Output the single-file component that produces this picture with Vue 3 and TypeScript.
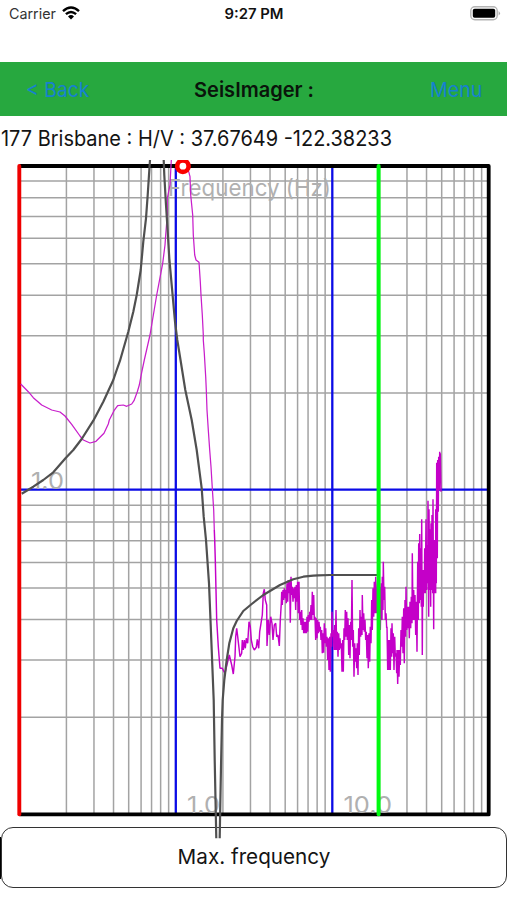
<script setup lang="ts">
type Pt = [number, number]
type Col = [number, number, number]

const plot = { left: 19.3, top: 166, mid: 489.7, bottom: 814.4, right: 488.7, decade: 156.5, vDecade: 324.3 }

const logs = [2, 3, 4, 5, 6, 7, 8, 9].map((n) => Math.log10(n))
const vLines = [0, 1, 2].flatMap((d) => logs.map((l) => plot.left + (d + l) * plot.decade))
const hLines = [0, 1].flatMap((d) => logs.map((l) => 490.5 + (d - l) * plot.vDecade))

// Curves are stored in thirds of a pixel, relative to the origin of each section.
function section(ox: number, oy: number, pts: Pt[]): Pt[] {
  return pts.map(([x, y]) => [ox + x / 3, oy + y / 3])
}
function columns(ox: number, oy: number, cols: Col[]): Pt[] {
  return section(ox, oy, cols.flatMap(([x, a, b]): Pt[] => [[x - 1, a], [x + 1, b]]))
}
function line(...parts: Pt[][]): string {
  return parts.flat().map(([x, y]) => `${x.toFixed(1)},${y.toFixed(1)}`).join(' ')
}

const measuredLow = line(
  section(0, 340, [[62, 132], [85, 155], [100, 173], [125, 195], [155, 210], [180, 216], [195, 228], [215, 253], [240, 288], [250, 300], [270, 309], [288, 304], [300, 292], [312, 280], [325, 252], [328, 240], [342, 212], [353, 197], [370, 195], [380, 199], [395, 192], [402, 182], [412, 155], [418, 135], [425, 97], [433, 60]]),
  section(0, 155, [[450, 540], [470, 420], [488, 325], [495, 270], [497, 240], [502, 180], [502, 130], [510, 90], [514, 15]]),
)
const measuredHigh = line(
  section(140, 155, [[135, 40], [146, 50], [150, 65], [152, 120], [158, 180], [160, 240], [164, 300], [168, 315], [177, 322], [181, 380], [183, 420], [187, 480], [190, 540]]),
  section(160, 340, [[130, 0], [133, 40], [137, 110], [139, 150], [141, 210], [145, 270], [149, 330], [153, 380], [157, 445], [161, 510], [163, 570]]),
)
const measuredNoise = line(
  section(160, 340, [[163, 570]]),
  section(190, 540, [[74, 0], [76, 60], [78, 150], [80, 240], [85, 320], [90, 385], [97, 385], [105, 400], [112, 370], [118, 345], [125, 375], [130, 402], [135, 350], [137, 290], [140, 265], [143, 290], [150, 350], [155, 340], [157, 300], [160, 330], [163, 300], [166, 325], [169, 295], [173, 310], [177, 245], [181, 260], [184, 300], [188, 320], [193, 330], [199, 322], [202, 298], [206, 325], [209, 275], [213, 250], [217, 225], [220, 160], [223, 148], [226, 180], [230, 195], [231, 318], [235, 240], [238, 285], [242, 230], [246, 250], [249, 300], [253, 255], [257, 250], [260, 290], [264, 285], [268, 318], [271, 240], [274, 190]]),
  columns(190, 540, [[276, 155, 195], [280, 150, 180], [284, 145, 175], [288, 150, 190], [292, 130, 185], [296, 120, 160], [300, 125, 248], [304, 110, 165], [308, 140, 185], [312, 145, 175], [316, 140, 210], [320, 135, 185], [324, 125, 220], [328, 125, 240], [332, 215, 255], [336, 210, 270], [340, 235, 280], [344, 245, 280], [348, 245, 280], [352, 230, 275], [356, 225, 245], [360, 215, 240], [364, 195, 240], [368, 155, 225], [372, 165, 240], [376, 230, 300]]),
  columns(310, 540, [[20, 235, 295], [24, 240, 280], [28, 245, 275], [32, 260, 300], [36, 270, 340], [40, 280, 338], [44, 250, 310], [48, 265, 320], [52, 290, 360], [56, 295, 390], [60, 290, 395], [64, 280, 320], [67, 215, 290], [71, 270, 330], [75, 255, 330], [79, 210, 330], [83, 275, 350], [87, 280, 330], [91, 295, 325], [95, 310, 395], [99, 300, 395], [103, 265, 300], [107, 210, 290], [111, 215, 300], [115, 235, 345], [119, 255, 355], [123, 245, 300], [127, 120, 320], [131, 270, 410], [135, 310, 365], [139, 325, 385], [143, 310, 405], [147, 265, 345], [151, 210, 290], [155, 230, 285], [158, 165, 270], [162, 220, 275], [166, 240, 300], [170, 275, 355], [174, 285, 385], [178, 280, 365], [182, 260, 310], [186, 180, 270], [190, 145, 230], [194, 125, 220], [198, 110, 220], [204, 120, 220], [210, 140, 270], [215, 130, 240], [218, 110, 210], [221, 65, 180], [225, 140, 240], [229, 220, 265], [232, 260, 390], [236, 300, 390], [240, 300, 390], [244, 265, 350], [247, 250, 340], [251, 280, 390], [255, 290, 350], [259, 340, 400], [262, 330, 432], [266, 330, 410], [270, 330, 375], [274, 270, 320], [278, 230, 340], [282, 205, 370], [286, 180, 290], [289, 140, 270], [293, 200, 265], [297, 200, 295], [301, 185, 265], [305, 170, 250], [308, 40, 240], [312, 150, 240], [316, 165, 285], [320, 185, 335]]),
  columns(380, 430, [[114, 395, 570], [117, 340, 520], [120, 312, 510], [123, 355, 530], [126, 268, 675], [129, 420, 530], [132, 420, 490], [135, 355, 490], [139, 268, 480], [142, 345, 460], [145, 212, 560], [148, 238, 480], [151, 298, 530], [154, 280, 480], [157, 255, 490], [160, 208, 598], [163, 330, 490], [166, 330, 490], [168, 238, 460], [171, 98, 385], [174, 90, 245], [177, 80, 180], [180, 65, 155], [182, 70, 185]]),
)

const modelLow = line(
  section(0, 340, [[65, 461], [100, 440], [130, 420], [160, 397], [197, 354], [220, 330], [245, 297], [280, 242], [310, 185], [340, 120], [350, 90], [360, 62]]),
  section(0, 155, [[385, 530], [400, 470], [410, 420], [422, 345], [430, 260], [438, 190], [443, 120], [447, 60], [450, 15]]),
)
const modelFall = line(
  section(0, 155, [[491, 15], [493, 60], [498, 150], [503, 230], [508, 310], [516, 400], [525, 500], [532, 555]]),
  section(160, 340, [[60, 50], [76, 150], [95, 240], [110, 330], [125, 445], [131, 530]]),
  section(190, 540, [[48, 0], [57, 130], [64, 300], [71, 480]]),
  section(140, 690, [[224, 210], [229, 445]]),
)
const modelRise = line(
  section(140, 690, [[239, 445], [243, 230], [246, 90]]),
  section(190, 540, [[98, 480], [103, 420], [110, 360], [118, 310], [130, 265], [140, 243], [160, 213], [185, 192], [220, 165], [240, 153], [270, 135], [310, 118], [340, 110], [370, 107]]),
  section(310, 540, [[25, 106], [60, 105], [205, 105]]),
)
</script>

<template>
  <main class="screen">
    <header class="status">
      <div class="carrier">
        <span>Carrier</span>
        <svg class="wifi" viewBox="0 0 18 14">
          <path d="M1 5.2Q9-2.2 17 5.2" />
          <path d="M3.9 8.2Q9 3.6 14.1 8.2" />
          <path class="dot" d="M6 10.4Q9 7.8 12 10.4L9 13.6Z" />
        </svg>
      </div>
      <svg class="clock" viewBox="0 0 70 20"><text x="0.5" y="14.5" textLength="59" lengthAdjust="spacingAndGlyphs">9:27 PM</text></svg>
      <svg class="battery" viewBox="0 0 31 15">
        <rect class="case" x="0.8" y="0.8" width="26.4" height="13" rx="4" />
        <rect class="charge" x="2.8" y="2.8" width="22.4" height="9" rx="1.8" />
        <path class="cap" d="M28.6 5Q31.4 7.3 28.6 9.6Z" />
      </svg>
    </header>

    <nav class="bar">
      <svg viewBox="0 0 507 54">
        <text class="link" x="26" y="34.5" textLength="63.5" lengthAdjust="spacingAndGlyphs">&lt; Back</text>
        <text class="title" x="194" y="34.5" textLength="120" lengthAdjust="spacingAndGlyphs">SeisImager :</text>
        <text class="link" x="430" y="34.5" textLength="52.5" lengthAdjust="spacingAndGlyphs">Menu</text>
      </svg>
    </nav>

    <svg class="site" viewBox="0 0 507 44">
      <text x="1" y="29.9" textLength="391" lengthAdjust="spacingAndGlyphs">177 Brisbane : H/V : 37.67649 -122.38233</text>
    </svg>

    <svg class="chart" viewBox="0 160 507 679">
      <g class="grid">
        <line v-for="x in vLines" :key="x" :x1="x" :x2="x" y1="166" y2="814" />
        <line v-for="y in hLines" :key="y" x1="19" x2="488" :y1="y" :y2="y" />
      </g>
      <g class="major">
        <line x1="19" x2="488" :y1="plot.mid" :y2="plot.mid" />
        <line x1="175.8" x2="175.8" y1="166" y2="814" />
        <line x1="332.3" x2="332.3" y1="166" y2="814" />
      </g>
      <path class="frame" d="M19.5 166H488.7V814.4H19.5" />
      <line class="min" x1="19.3" x2="19.3" y1="166" y2="814.3" />
      <g class="labels">
        <text x="168" y="195.8" textLength="163" lengthAdjust="spacingAndGlyphs">Frequency (Hz)</text>
        <text x="31" y="488.8" textLength="33" lengthAdjust="spacingAndGlyphs">1.0</text>
        <text x="187" y="813.3" textLength="33" lengthAdjust="spacingAndGlyphs">1.0</text>
        <text x="343.5" y="813.3" textLength="48.5" lengthAdjust="spacingAndGlyphs">10.0</text>
      </g>
      <g class="measured">
        <polyline :points="measuredLow" />
        <polyline :points="measuredHigh" />
        <polyline class="noise" :points="measuredNoise" />
      </g>
      <g class="model">
        <polyline :points="modelLow" />
        <polyline :points="modelFall" />
        <polyline :points="modelRise" />
      </g>
      <line class="max" x1="378.6" x2="378.6" y1="166" y2="814.3" />
      <circle class="peak" cx="182.9" cy="166.2" r="5.7" />
    </svg>

    <div class="footer">
      <span class="edge"></span>
      <button class="action" type="button">Max. frequency</button>
    </div>
  </main>
</template>

<style>
body { margin: 0; background: #fff; }
</style>

<style scoped>
.screen { width: 507px; height: 900px; overflow: hidden; display: flex; flex-direction: column; background: #fff; font-family: Inter, "Liberation Sans", sans-serif; }
svg { display: block; }
.status { height: 62px; flex: none; display: grid; grid-template-columns: 224px 1fr 37px; align-items: start; }
.carrier { display: flex; gap: 6px; padding: 5px 0 0 9px; font-size: 14.3px; line-height: 17px; color: #333; }
.wifi { width: 18px; height: 14px; margin-top: 1px; fill: none; stroke: #000; stroke-width: 2.4; }
.wifi .dot { fill: #000; stroke: none; }
.clock { width: 70px; height: 20px; margin-top: 4px; font-size: 14.5px; font-weight: 600; fill: #111; }
.battery { width: 31px; height: 15px; margin-top: 6px; }
.case { fill: none; stroke: #b4b4b4; stroke-width: 1.4; }
.charge { fill: #000; }
.cap { fill: #aaa; }
.bar { height: 54px; flex: none; background: #27a83f; }
.bar svg { width: 507px; height: 54px; }
.link { font-size: 20.5px; fill: #1681cf; }
.title { font-size: 20.5px; font-weight: 600; fill: #0a140b; }
.site { width: 507px; height: 44px; flex: none; font-size: 21px; fill: #141414; }
.chart { position: relative; z-index: 1; width: 507px; height: 679px; margin-bottom: -12px; flex: none; pointer-events: none; fill: none; }
.grid { stroke: #a3a3a3; stroke-width: 1.5; }
.major { stroke: #0b0be6; stroke-width: 2.3; }
.frame { stroke: #000; stroke-width: 3.8; stroke-linejoin: round; }
.min { stroke: #ef0000; stroke-width: 3.9; stroke-linecap: round; }
.max { stroke: #00fa10; stroke-width: 4; stroke-linecap: round; }
.labels { fill: #b0b0b0; font-size: 23.5px; font-weight: 400; }
.measured { stroke: #c81ecb; stroke-width: 1.25; stroke-linejoin: bevel; }
.noise { stroke: #c400c8; stroke-width: 1.45; }
.model { stroke: #505050; stroke-width: 2.2; stroke-linejoin: round; }
.peak { fill: #fff; stroke: #fa0000; stroke-width: 4.6; }
.footer { flex: none; height: 61px; display: flex; align-items: center; }
.edge { width: 1px; height: 42px; background: #000; }
.action { flex: 1; height: 61px; box-sizing: border-box; margin: 0; padding: 0 0 1px; border: 1px solid #333; border-radius: 12px; background: #fff; color: #141414; font: 400 20.7px/30px Inter, "Liberation Sans", sans-serif; text-align: center; }
</style>
